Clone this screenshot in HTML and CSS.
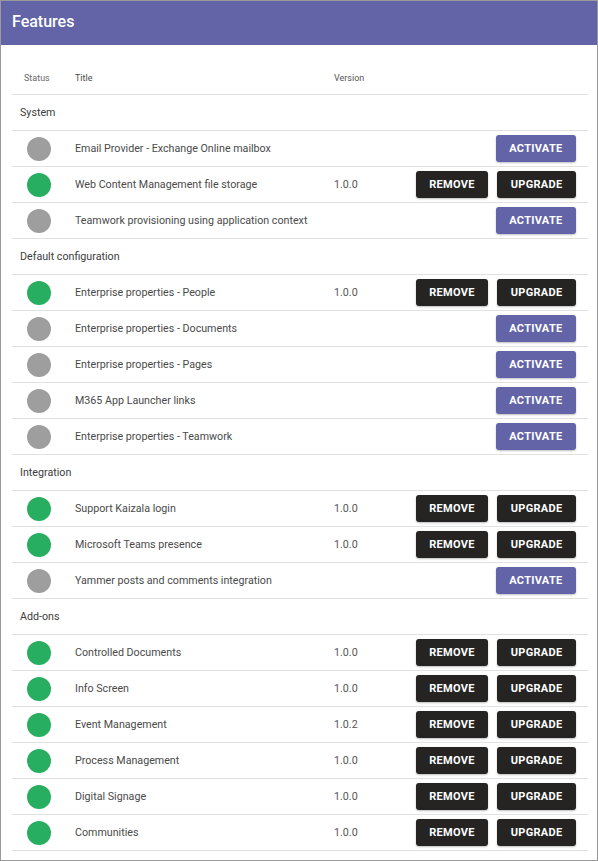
FILE: index.html
```html
<!DOCTYPE html>
<html>
<head>
<meta charset="utf-8">
<link rel="stylesheet" href="styles.css">
</head>
<body>
<div class="panel">
  <div class="titlebar">Features</div>
  <div class="content">
    <div class="row head">
      <div class="c-status">Status</div>
      <div class="c-title">Title</div>
      <div class="c-version">Version</div>
      <div class="c-actions"></div>
    </div>

    <div class="group">System</div>
    <div class="row"><div class="c-status"><span class="dot off"></span></div><div class="c-title">Email Provider - Exchange Online mailbox</div><div class="c-version"></div><div class="c-actions"><button class="btn act">Activate</button></div></div>
    <div class="row"><div class="c-status"><span class="dot on"></span></div><div class="c-title">Web Content Management file storage</div><div class="c-version">1.0.0</div><div class="c-actions"><button class="btn dark">Remove</button><button class="btn dark">Upgrade</button></div></div>
    <div class="row"><div class="c-status"><span class="dot off"></span></div><div class="c-title">Teamwork provisioning using application context</div><div class="c-version"></div><div class="c-actions"><button class="btn act">Activate</button></div></div>

    <div class="group">Default configuration</div>
    <div class="row"><div class="c-status"><span class="dot on"></span></div><div class="c-title">Enterprise properties - People</div><div class="c-version">1.0.0</div><div class="c-actions"><button class="btn dark">Remove</button><button class="btn dark">Upgrade</button></div></div>
    <div class="row"><div class="c-status"><span class="dot off"></span></div><div class="c-title">Enterprise properties - Documents</div><div class="c-version"></div><div class="c-actions"><button class="btn act">Activate</button></div></div>
    <div class="row"><div class="c-status"><span class="dot off"></span></div><div class="c-title">Enterprise properties - Pages</div><div class="c-version"></div><div class="c-actions"><button class="btn act">Activate</button></div></div>
    <div class="row"><div class="c-status"><span class="dot off"></span></div><div class="c-title">M365 App Launcher links</div><div class="c-version"></div><div class="c-actions"><button class="btn act">Activate</button></div></div>
    <div class="row"><div class="c-status"><span class="dot off"></span></div><div class="c-title">Enterprise properties - Teamwork</div><div class="c-version"></div><div class="c-actions"><button class="btn act">Activate</button></div></div>

    <div class="group">Integration</div>
    <div class="row"><div class="c-status"><span class="dot on"></span></div><div class="c-title">Support Kaizala login</div><div class="c-version">1.0.0</div><div class="c-actions"><button class="btn dark">Remove</button><button class="btn dark">Upgrade</button></div></div>
    <div class="row"><div class="c-status"><span class="dot on"></span></div><div class="c-title">Microsoft Teams presence</div><div class="c-version">1.0.0</div><div class="c-actions"><button class="btn dark">Remove</button><button class="btn dark">Upgrade</button></div></div>
    <div class="row"><div class="c-status"><span class="dot off"></span></div><div class="c-title">Yammer posts and comments integration</div><div class="c-version"></div><div class="c-actions"><button class="btn act">Activate</button></div></div>

    <div class="group">Add-ons</div>
    <div class="row"><div class="c-status"><span class="dot on"></span></div><div class="c-title">Controlled Documents</div><div class="c-version">1.0.0</div><div class="c-actions"><button class="btn dark">Remove</button><button class="btn dark">Upgrade</button></div></div>
    <div class="row"><div class="c-status"><span class="dot on"></span></div><div class="c-title">Info Screen</div><div class="c-version">1.0.0</div><div class="c-actions"><button class="btn dark">Remove</button><button class="btn dark">Upgrade</button></div></div>
    <div class="row"><div class="c-status"><span class="dot on"></span></div><div class="c-title">Event Management</div><div class="c-version">1.0.2</div><div class="c-actions"><button class="btn dark">Remove</button><button class="btn dark">Upgrade</button></div></div>
    <div class="row"><div class="c-status"><span class="dot on"></span></div><div class="c-title">Process Management</div><div class="c-version">1.0.0</div><div class="c-actions"><button class="btn dark">Remove</button><button class="btn dark">Upgrade</button></div></div>
    <div class="row"><div class="c-status"><span class="dot on"></span></div><div class="c-title">Digital Signage</div><div class="c-version">1.0.0</div><div class="c-actions"><button class="btn dark">Remove</button><button class="btn dark">Upgrade</button></div></div>
    <div class="row"><div class="c-status"><span class="dot on"></span></div><div class="c-title">Communities</div><div class="c-version">1.0.0</div><div class="c-actions"><button class="btn dark">Remove</button><button class="btn dark">Upgrade</button></div></div>
  </div>
</div>
</body>
</html>
```
FILE: styles.css
```css
* { box-sizing: border-box; }
html, body { margin: 0; padding: 0; background: #fff; }
body { font-family: Roboto, "Liberation Sans", sans-serif; color: #444; }

.panel {
  width: 598px;
  height: 861px;
  border: 1px solid #9a9a9a;
  overflow: hidden;
}

.titlebar {
  height: 44px;
  background: #6264a7;
  color: #fff;
  font-size: 16px;
  font-weight: 500;
  line-height: 42px;
  padding-left: 11px;
}

.content {
  padding: 16px 9px 0 11px;
}

.row {
  display: grid;
  grid-template-columns: 63px 259px 1fr auto;
  align-items: center;
  height: 36px;
  border-bottom: 1px solid #e1e1e1;
  font-size: 10.7px;
}

.row.head {
  height: 34px;
  font-size: 9px;
  color: #6a6a6a;
}
.row.head .c-status { padding-left: 12px; }

.group {
  height: 36px;
  line-height: 35px;
  padding-left: 8px;
  font-size: 10.7px;
  color: #3c3c3c;
  border-bottom: 1px solid #e1e1e1;
}

.c-title { color: #4a4a4a; white-space: nowrap; }
.c-version { color: #555; }

.dot {
  display: block;
  width: 24px;
  height: 24px;
  border-radius: 50%;
  margin-left: 15px;
}
.dot.on { background: #27ae60; }
.dot.off { background: #9e9e9e; }

.c-actions {
  display: flex;
  justify-content: flex-end;
  gap: 9px;
  padding-right: 12px;
}

.btn {
  font-family: Roboto, "Liberation Sans", sans-serif;
  font-size: 11px;
  font-weight: 700;
  text-transform: uppercase;
  letter-spacing: 0.3px;
  height: 27px;
  border: none;
  border-radius: 3px;
  color: #fff;
  padding: 0 13.5px;
  box-shadow: 0 1px 2px rgba(0,0,0,0.25);
  cursor: pointer;
}
.btn.dark { background: #252423; }
.btn.act { background: #6264a7; min-width: 80px; }
```
